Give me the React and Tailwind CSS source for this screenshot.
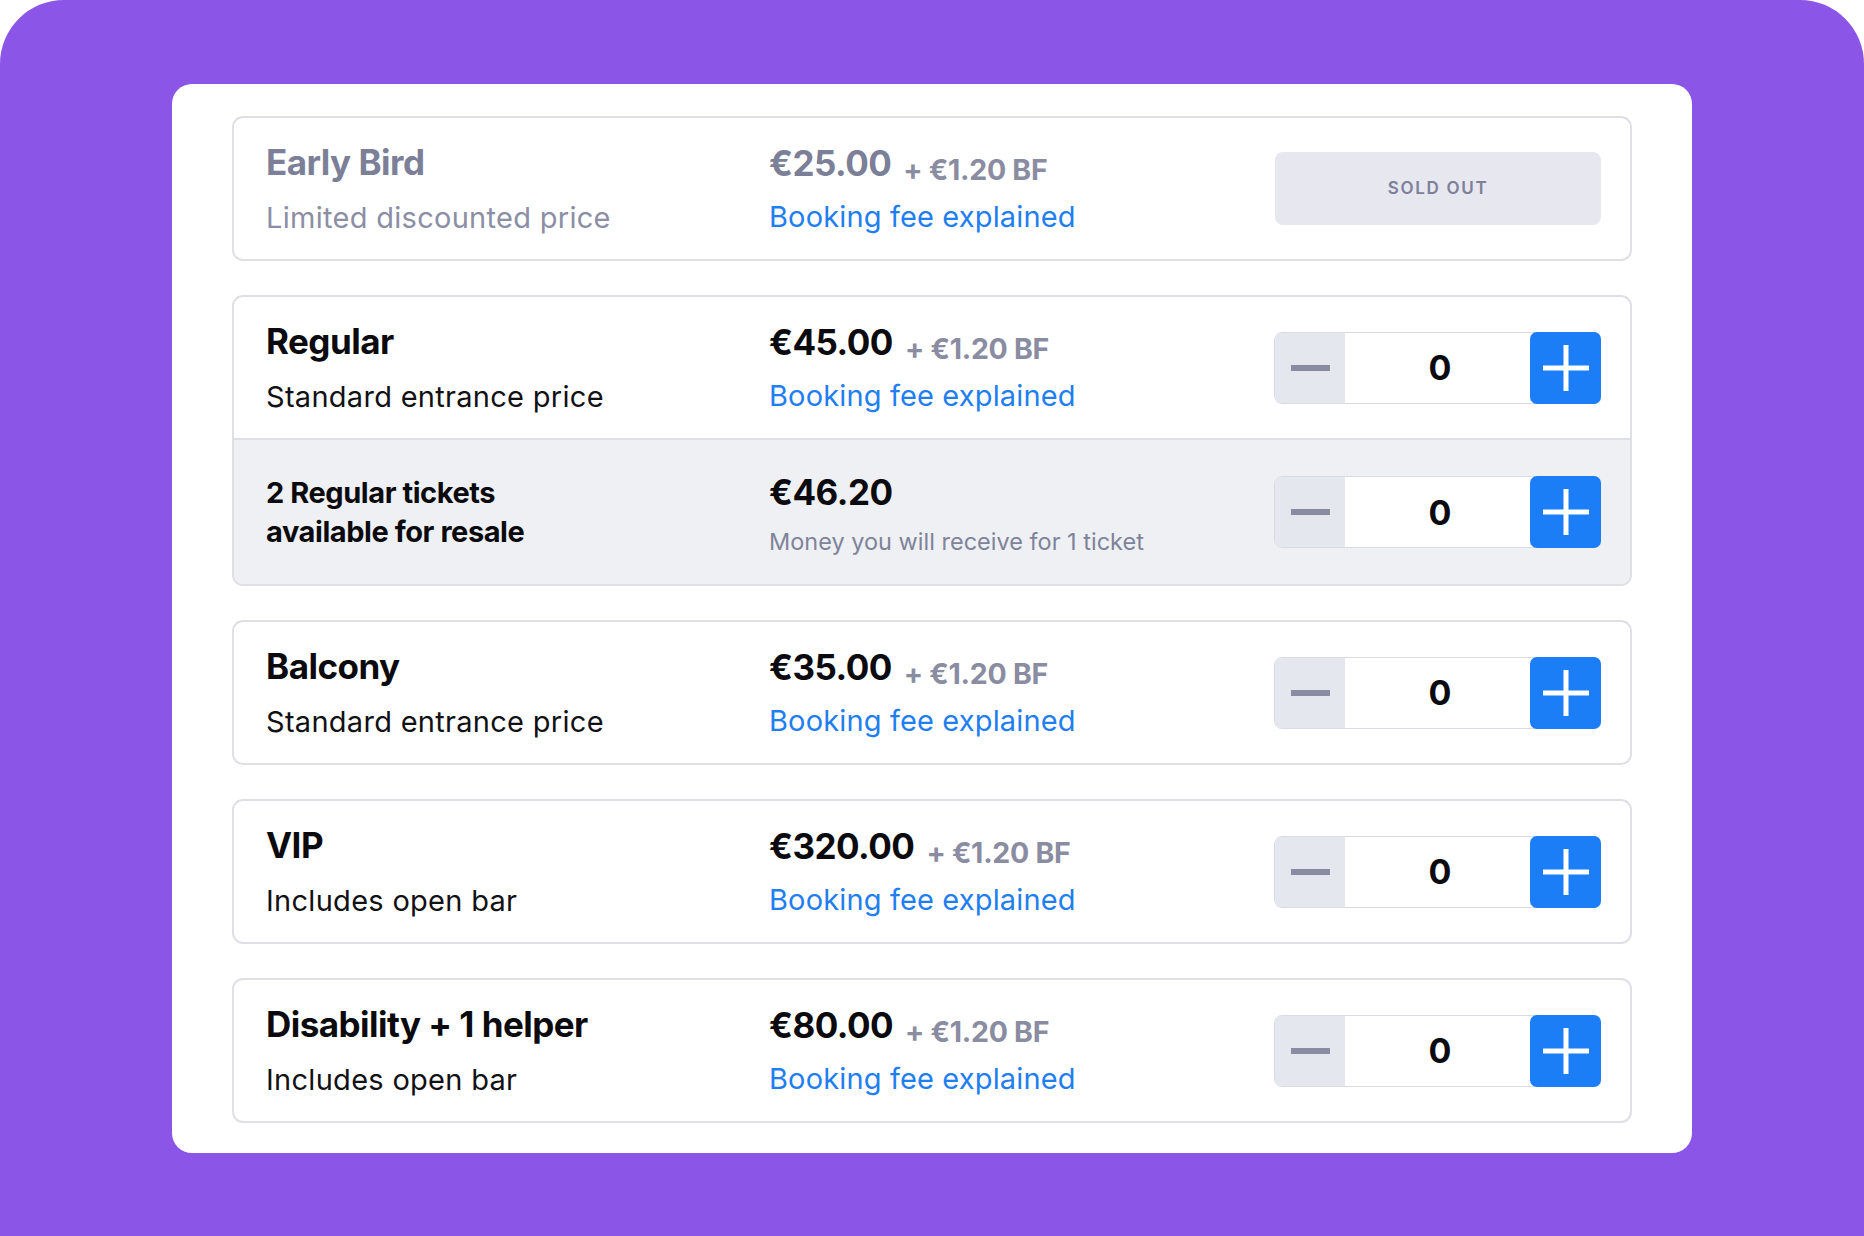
import React from 'react'

const TICKETS = [
  { id: 'early', titre: 'Early Bird', desc: 'Limited discounted price', prix: '€25.00', soldOut: true },
  {
    id: 'regular',
    titre: 'Regular',
    desc: 'Standard entrance price',
    prix: '€45.00',
    revente: { titre: ['2 Regular tickets', 'available for resale'], prix: '€46.20', desc: 'Money you will receive for 1 ticket' },
  },
  { id: 'balcony', titre: 'Balcony', desc: 'Standard entrance price', prix: '€35.00' },
  { id: 'vip', titre: 'VIP', desc: 'Includes open bar', prix: '€320.00' },
  { id: 'disability', titre: 'Disability + 1 helper', desc: 'Includes open bar', prix: '€80.00' },
]

function Compteur() {
  return (
    <div className="flex h-[72px] w-[327px] items-stretch rounded-[8px] border border-[#d9dbe3] bg-white">
      <button className="flex w-[70px] items-center justify-center rounded-l-[7px] bg-[#e5e7ef]">
        <span className="block h-[6px] w-[39px] bg-[#8a8ca3]" />
      </button>
      <div className="flex flex-1 items-center justify-center pl-[5px] text-[34px] font-bold text-[#0b0b0f]">0</div>
      <button className="-my-px -mr-px flex w-[71px] items-center justify-center rounded-[7px] bg-[#1b7ef6]">
        <svg width="46" height="46" viewBox="0 0 46 46">
          <rect x="20.5" y="0" width="5" height="46" fill="#fff" />
          <rect x="0" y="20.5" width="46" height="5" fill="#fff" />
        </svg>
      </button>
    </div>
  )
}

function Prix({ prix, gris }) {
  return (
    <div className="flex flex-col gap-[14px]">
      <div className="flex items-baseline gap-[12px] leading-[41px]">
        <span className={`text-[35px] font-bold tracking-[-0.015em] ${gris ? 'text-[#7c7f98]' : 'text-[#0b0b0f]'}`}>{prix}</span>
        <span className="translate-y-[4px] text-[28.5px] font-bold tracking-[-0.01em] text-[#8a8ca2]">+ €1.20 BF</span>
      </div>
      <a className="text-[29px] leading-[34px] tracking-[0.005em] text-[#1f7ef0]">Booking fee explained</a>
    </div>
  )
}

function Ligne({ t }) {
  return (
    <div className="flex h-[141px] items-center pl-[32px] pr-[29px]">
      <div className="flex w-[503px] flex-col gap-[18px]">
        <p className={`text-[35px] font-bold leading-[41px] tracking-[-0.015em] ${t.soldOut ? 'text-[#7c7f98]' : 'text-[#0b0b0f]'}`}>
          {t.titre}
        </p>
        <p className={`text-[29px] leading-[34px] tracking-[0.01em] ${t.soldOut ? 'text-[#8b8ea4]' : 'text-[#111116]'}`}>{t.desc}</p>
      </div>
      <div className="flex-1">
        <Prix prix={t.prix} gris={t.soldOut} />
      </div>
      {t.soldOut ? (
        <div className="flex h-[73px] w-[326px] items-center justify-center rounded-[8px] bg-[#e6e7ef] text-[17px] font-semibold tracking-[0.1em] text-[#7d8097]">
          SOLD OUT
        </div>
      ) : (
        <Compteur />
      )}
    </div>
  )
}

function Revente({ r }) {
  return (
    <div className="flex h-[146px] items-center rounded-b-[9px] border-t-2 border-[#dfe0e6] bg-[#eef0f4] pl-[32px] pr-[29px]">
      <div className="w-[503px] text-[29px] font-bold leading-[39px] tracking-[-0.015em] text-[#0b0b0f]">
        <p>{r.titre[0]}</p>
        <p>{r.titre[1]}</p>
      </div>
      <div className="flex flex-1 flex-col gap-[15px] pt-[4px]">
        <span className="text-[35px] font-bold leading-[41px] tracking-[-0.015em] text-[#0b0b0f]">{r.prix}</span>
        <span className="text-[23.5px] leading-[28px] text-[#7f8399]">{r.desc}</span>
      </div>
      <Compteur />
    </div>
  )
}

export default function App() {
  return (
    <div className="min-h-[1236px] bg-white" style={{ fontFamily: 'Inter, "Noto Sans", sans-serif' }}>
      <div className="min-h-[1236px] rounded-t-[64px] bg-[#8b55e8] pt-[84px]">
        <div className="mx-auto flex w-[1520px] flex-col gap-[34px] rounded-[20px] bg-white px-[60px] pt-[32px] pb-[30px]">
          {TICKETS.map((t) => (
            <div key={t.id} className="rounded-[11px] border-2 border-[#dfe0e6] bg-white">
              <Ligne t={t} />
              {t.revente && <Revente r={t.revente} />}
            </div>
          ))}
        </div>
      </div>
    </div>
  )
}
